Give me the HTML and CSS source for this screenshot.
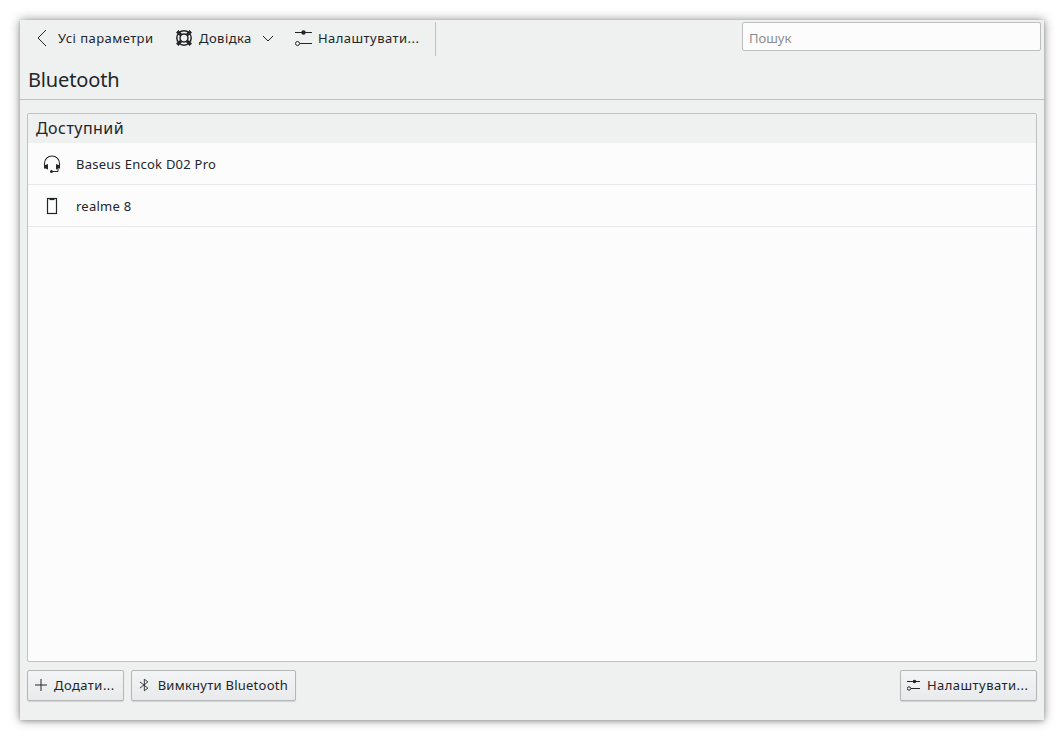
FILE: index.html
```html
<!DOCTYPE html>
<html lang="uk">
<head>
<meta charset="utf-8">
<title>Bluetooth</title>
<link rel="stylesheet" href="styles.css">
</head>
<body>
<div class="window">
  <header class="header">
    <div class="toolbar">
      <div class="tools">
        <div class="tool tool-back">
          <svg class="icon" width="16" height="18" viewBox="0 0 16 18"><path d="M12 1 L4 9 L12 17" fill="none" stroke="#232629" stroke-width="1"/></svg>
          <span class="cy">Усі параметри</span>
        </div>
        <div class="tool tool-help">
          <svg class="icon" width="18" height="18" viewBox="0 0 18 18"><circle cx="9" cy="9" r="7.2" fill="none" stroke="#232629" stroke-width="1.5"/><circle cx="9" cy="9" r="4" fill="none" stroke="#232629" stroke-width="1.5"/><path d="M1 3.5 L3.5 1 L7.5 5.5 L5.5 7.5 Z M14.5 1 L17 3.5 L12.5 7.5 L10.5 5.5 Z M1 14.5 L5.5 10.5 L7.5 12.5 L3.5 17 Z M17 14.5 L14.5 17 L10.5 12.5 L12.5 10.5 Z" fill="#232629"/></svg>
          <span class="cy">Довідка</span>
          <svg class="chevron" width="12" height="12" viewBox="0 0 12 12"><path d="M1 4 L6 9 L11 4" fill="none" stroke="#232629" stroke-width="1"/></svg>
        </div>
        <div class="tool tool-config">
          <svg class="icon" width="18" height="18" viewBox="0 0 18 18"><path d="M0 3.5H17M5 14.5H17" stroke="#232629" stroke-width="1"/><circle cx="8.5" cy="3.5" r="2.2" fill="#232629"/><circle cx="2.5" cy="14.5" r="2" fill="none" stroke="#232629"/></svg>
          <span class="cy">Налаштувати...</span>
        </div>
      </div>
      <div class="search">Пошук</div>
    </div>
    <h1 class="title">Bluetooth</h1>
  </header>
  <main class="content">
    <section class="panel">
      <div class="panel-head">Доступний</div>
      <div class="row">
        <svg class="icon" width="18" height="18" viewBox="0 0 18 18"><path d="M1.5 11V8.5a7.5 7.5 0 0 1 15 0V11" fill="none" stroke="#232629" stroke-width="1.1"/><path d="M1 10H2.5L5 9V14.5L2.5 13.5H1ZM17 10H15.5L13 9V14.5L15.5 13.5H17Z" fill="#232629"/><path d="M15 14V16.5H10" fill="none" stroke="#232629"/><circle cx="8.5" cy="16.5" r="1.5" fill="#232629"/></svg>
        <span class="lat">Baseus Encok D02 Pro</span>
      </div>
      <div class="row">
        <svg class="icon" width="18" height="18" viewBox="0 0 18 18"><rect x="4.5" y="1.5" width="9" height="15" fill="none" stroke="#232629" stroke-width="1.2"/><rect x="6.5" y="1.5" width="5" height="1.6" fill="#232629"/></svg>
        <span class="lat">realme 8</span>
      </div>
    </section>
    <footer class="footer">
      <div class="btn btn-add">
        <svg width="12" height="12" viewBox="0 0 12 12"><path d="M6 0V12M0 6H12" stroke="#232629" stroke-width="1"/></svg>
        <span class="cy">Додати...</span>
      </div>
      <div class="btn btn-bt">
        <svg width="12" height="14" viewBox="0 0 12 14"><path d="M1 3.5 L10 10.5 L6 13.5 V0.5 L10 3.5 L1 10.5" fill="none" stroke="#232629" stroke-width="1"/></svg>
        <span class="lat">Вимкнути Bluetooth</span>
      </div>
      <div class="btn btn-right">
        <svg class="btn-tune" width="14" height="14" viewBox="0 0 14 14"><path d="M0 3.5H13M4 10.5H13" stroke="#232629" stroke-width="1"/><circle cx="7.5" cy="3.5" r="1.8" fill="#232629"/><circle cx="2" cy="10.5" r="1.7" fill="none" stroke="#232629"/></svg>
        <span class="cy">Налаштувати...</span>
      </div>
    </footer>
  </main>
</div>
</body>
</html>
```

FILE: styles.css
```css
* { box-sizing: border-box; }
html, body { margin: 0; height: 100%; background: #ffffff; }
body {
  padding: 20px;
  font-family: "Noto Sans", sans-serif;
  font-size: 13px;
  color: #232629;
  overflow: hidden;
}
.cy { letter-spacing: .45px; }
.lat { letter-spacing: .25px; }
.window {
  width: 1024px;
  height: 700px;
  background: #eff0f0;
  display: flex;
  flex-direction: column;
  box-shadow: 0 0 10px rgba(0,0,0,.42), 0 1px 4px rgba(0,0,0,.2);
}
.header { height: 80px; border-bottom: 1px solid #bfc2c4; flex: none; }
.toolbar {
  height: 36px;
  padding: 2px 3px 0 0;
  display: flex;
  justify-content: space-between;
  align-items: flex-start;
}
.tools {
  height: 34px;
  width: 416px;
  border-right: 1px solid #bfc2c4;
  display: flex;
  align-items: center;
  padding: 0 0 2px 14px;
}
.tool { display: flex; align-items: center; white-space: nowrap; }
.tool-back { gap: 8px; width: 141px; }
.tool-help { gap: 6px; width: 120px; }
.tool-help .chevron { margin-left: 4px; }
.tool-config { gap: 5px; }
.icon { flex: none; display: block; }
.search {
  width: 299px;
  height: 29px;
  background: #fcfcfc;
  border: 1px solid #bcbebf;
  border-radius: 2px;
  padding: 1px 0 0 6px;
  line-height: 29px;
  color: #8a8d8f;
}
.title {
  margin: 0;
  padding: 10px 0 0 8px;
  font-size: 20px;
  font-weight: 400;
  line-height: 27px;
  letter-spacing: -.15px;
}
.content {
  flex: 1;
  display: flex;
  flex-direction: column;
  padding: 13px 7px 19px;
  min-height: 0;
}
.panel {
  flex: 1;
  background: #fcfcfc;
  border: 1px solid #bfc2c4;
  border-radius: 2px;
}
.panel-head {
  height: 29px;
  background: #eff0f0;
  padding-left: 8px;
  font-size: 16px;
  line-height: 28px;
  letter-spacing: .45px;
}
.row {
  height: 42px;
  display: flex;
  align-items: center;
  gap: 15px;
  padding-left: 15px;
  border-bottom: 1px solid #e8e9ea;
}
.footer {
  flex: none;
  display: flex;
  gap: 7px;
  padding-top: 8px;
}
.btn {
  height: 31px;
  display: flex;
  align-items: center;
  gap: 7px;
  padding: 0 7px 2px;
  background: linear-gradient(#f3f4f5, #e9eaeb);
  border: 1px solid #b4b6b8;
  border-radius: 2px;
  box-shadow: 0 1px 1px rgba(0,0,0,.12);
  white-space: nowrap;
}
.btn-add { width: 97px; }
.btn-bt { width: 165px; }
.btn-bt svg { margin-right: 1px; }
.btn-right { margin-left: auto; width: 137px; gap: 6px; }
.btn-tune { margin-left: -1px; }
```
